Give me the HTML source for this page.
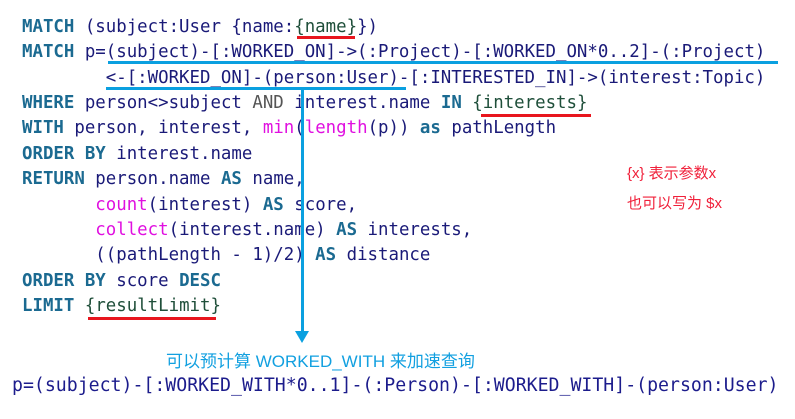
<!DOCTYPE html>
<html><head><meta charset="utf-8"><style>
html,body{margin:0;padding:0;background:#fff;width:795px;height:419px;overflow:hidden;position:relative}
.code{position:absolute;left:22px;top:14.7px;font-family:"DejaVu Sans Mono","Liberation Mono",monospace;font-size:17.4px;line-height:25.4px;color:#1a1a78;white-space:pre}
.k{color:#1b6a91;font-weight:bold}
.f{color:#e010e0}
.p{color:#1f4f3a}
.g{color:#555}
.ln{position:absolute;background:#0aa0e0}
.rd{position:absolute;background:#e8161e;height:3px}
.note{position:absolute;font-family:"Liberation Sans","Noto Sans CJK SC",sans-serif;font-size:15px;color:#f0203a}
.cap{position:absolute;left:166px;top:347px;font-family:"Liberation Sans","Noto Sans CJK SC",sans-serif;font-size:17px;color:#12a0e0}
.bot{position:absolute;left:12px;top:375px;font-family:"DejaVu Sans Mono","Liberation Mono",monospace;font-size:18.2px;color:#1c1c8c;white-space:pre}
</style></head><body>
<div class="code"><span class="k">MATCH</span> (subject:User {name:<span class="p">{name}</span>})
<span class="k">MATCH</span> p=(subject)-[:WORKED_ON]-&gt;(:Project)-[:WORKED_ON*0..2]-(:Project)
        &lt;-[:WORKED_ON]-(person:User)-[:INTERESTED_IN]-&gt;(interest:Topic)
<span class="k">WHERE</span> person&lt;&gt;subject <span class="g">AND</span> interest.name <span class="k">IN</span> <span class="p">{interests}</span>
<span class="k">WITH</span> person, interest, <span class="f">min</span>(<span class="f">length</span>(p)) <span class="k">as</span> pathLength
<span class="k">ORDER BY</span> interest.name
<span class="k">RETURN</span> person.name <span class="k">AS</span> name,
       <span class="f">count</span>(interest) <span class="k">AS</span> score,
       <span class="f">collect</span>(interest.name) <span class="k">AS</span> interests,
       ((pathLength - 1)/2) <span class="k">AS</span> distance
<span class="k">ORDER BY</span> score <span class="k">DESC</span>
<span class="k">LIMIT</span> <span class="p">{resultLimit}</span></div>
<div class="rd" style="left:297px;top:36px;width:58px"></div>
<div class="rd" style="left:481px;top:114px;width:110px"></div>
<div class="rd" style="left:88px;top:317px;width:128px"></div>
<div class="ln" style="left:108px;top:61px;width:670px;height:3px"></div>
<div class="ln" style="left:106px;top:87px;width:300px;height:3px"></div>
<div class="ln" style="left:301px;top:88px;width:3px;height:246px"></div>
<svg style="position:absolute;left:295px;top:330px" width="15" height="14"><polygon points="0,1 14,1 7,13" fill="#0aa0e0"/></svg>
<div class="note" style="left:627px;top:162px">{x} 表示参数x</div>
<div class="note" style="left:627px;top:192px">也可以写为 $x</div>
<div class="cap">可以预计算 WORKED_WITH 来加速查询</div>
<div class="bot">p=(subject)-[:WORKED_WITH*0..1]-(:Person)-[:WORKED_WITH]-(person:User)</div>
</body></html>
